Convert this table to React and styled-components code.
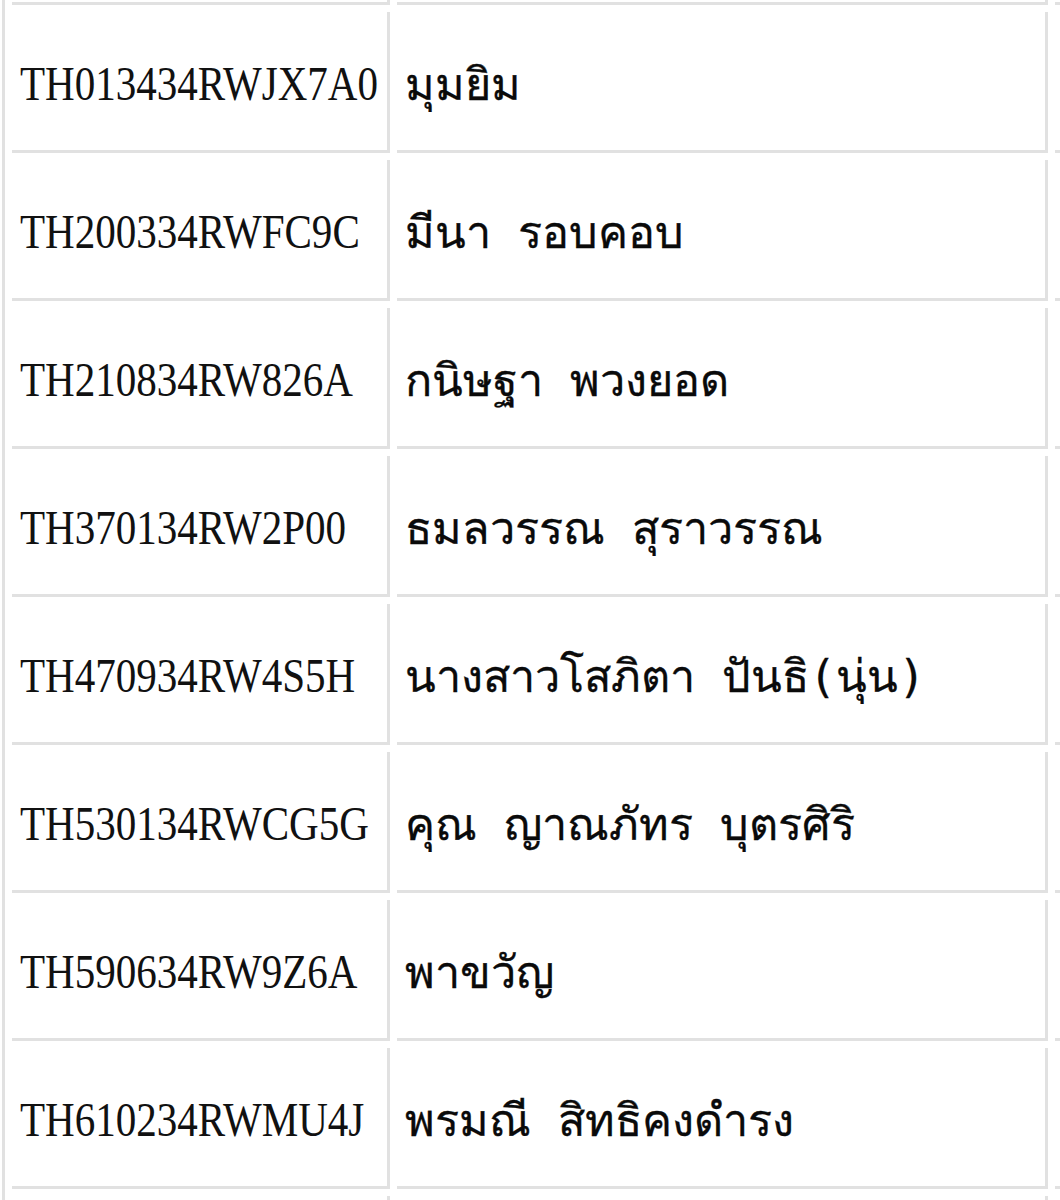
import React from 'react';
import styled, { createGlobalStyle } from 'styled-components';

const GlobalStyle = createGlobalStyle`
    html, body {
        margin: 0;
        padding: 0;
        background: #ffffff;
    }
`;

const LINE = '#e1e1e1';

const Viewport = styled.div`
    height: 1200px;
    overflow: hidden;
    background: #ffffff;
`;

const Sheet = styled.div`
    display: grid;
    grid-template-columns: 378px 651px 200px;
    grid-auto-rows: 141px;
    gap: 7px;
    margin: -136px 0 0 2px;
    padding-left: 7px;
    border-left: 3px solid ${LINE};
    width: max-content;
`;

const Cell = styled.div`
    display: flex;
    align-items: center;
    box-sizing: border-box;
    padding: 6px 0 0 8px;
    border-right: 3px solid ${LINE};
    border-bottom: 3px solid ${LINE};
    overflow: hidden;
    white-space: pre;
    color: #111;
`;

const Code = styled.span`
    display: inline-block;
    font-family: "Liberation Serif", "Times New Roman", serif;
    font-size: 48px;
    line-height: 1;
    transform: scaleX(0.855);
    transform-origin: left center;
`;

const Name = styled.span`
    font-family: monospace;
    font-size: 45px;
    line-height: 1;
    color: #0a0a0a;
    -webkit-text-stroke: 0.3px #0a0a0a;
`;

const rows = [
    { code: 'TH013434RWJX7A0', name: 'มุมยิม' },
    { code: 'TH200334RWFC9C', name: 'มีนา รอบคอบ' },
    { code: 'TH210834RW826A', name: 'กนิษฐา พวงยอด' },
    { code: 'TH370134RW2P00', name: 'ธมลวรรณ สุราวรรณ' },
    { code: 'TH470934RW4S5H', name: 'นางสาวโสภิตา ปันธิ(นุ่น)' },
    { code: 'TH530134RWCG5G', name: 'คุณ ญาณภัทร บุตรศิริ' },
    { code: 'TH590634RW9Z6A', name: 'พาขวัญ' },
    { code: 'TH610234RWMU4J', name: 'พรมณี สิทธิคงดำรง' },
];

const App = () => (
    <Viewport>
        <GlobalStyle />
        <Sheet>
            {/* row scrolled above the top edge, only its bottom border shows */}
            <Cell />
            <Cell />
            <Cell />
            {rows.map(row => (
                <React.Fragment key={row.code}>
                    <Cell>
                        <Code>{row.code}</Code>
                    </Cell>
                    <Cell>
                        <Name>{row.name}</Name>
                    </Cell>
                    <Cell />
                </React.Fragment>
            ))}
            <Cell />
            <Cell />
            <Cell />
        </Sheet>
    </Viewport>
);

export default App;
